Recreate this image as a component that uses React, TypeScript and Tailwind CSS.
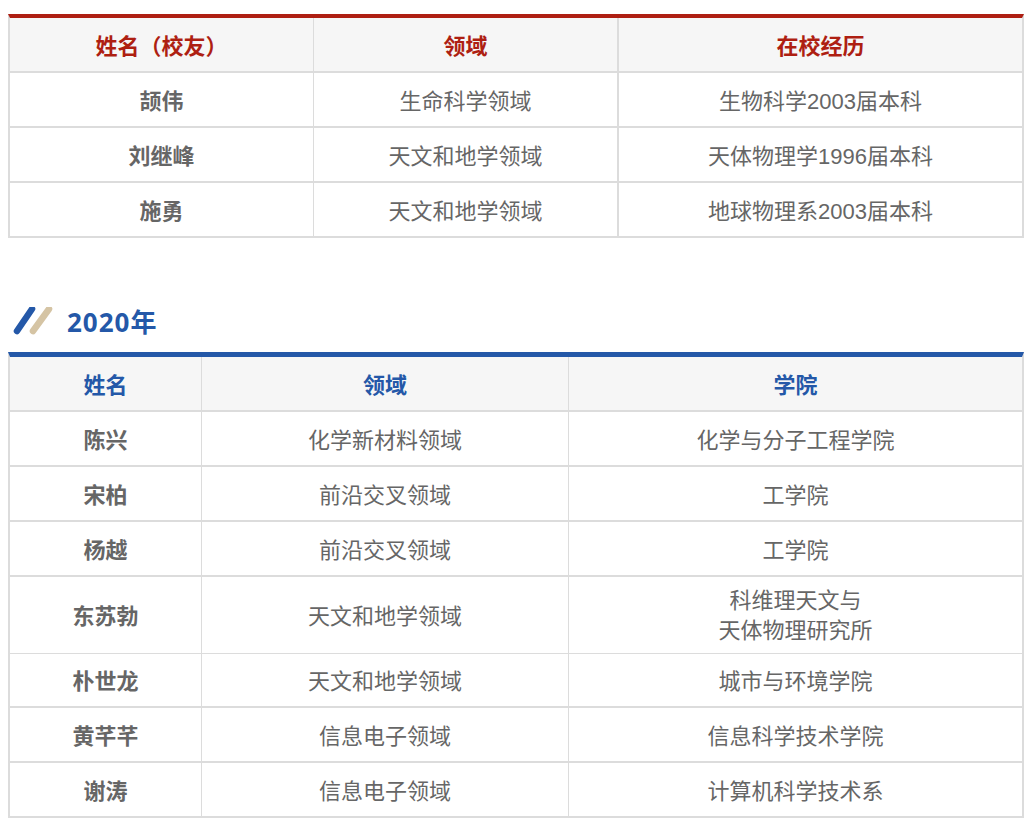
const alumni = [
  ['颉伟', '生命科学领域', '生物科学2003届本科'],
  ['刘继峰', '天文和地学领域', '天体物理学1996届本科'],
  ['施勇', '天文和地学领域', '地球物理系2003届本科'],
];

const winners = [
  { cells: ['陈兴', '化学新材料领域', '化学与分子工程学院'], rowClass: 'h-[55px] border-b-2' },
  { cells: ['宋柏', '前沿交叉领域', '工学院'], rowClass: 'h-[55px] border-b-2' },
  { cells: ['杨越', '前沿交叉领域', '工学院'], rowClass: 'h-[55px] border-b-2' },
  { cells: ['东苏勃', '天文和地学领域', '科维理天文与\n天体物理研究所'], rowClass: 'h-[77px] border-b', tall: true },
  { cells: ['朴世龙', '天文和地学领域', '城市与环境学院'], rowClass: 'h-[54px] border-b-2' },
  { cells: ['黄芊芊', '信息电子领域', '信息科学技术学院'], rowClass: 'h-[55px] border-b-2' },
  { cells: ['谢涛', '信息电子领域', '计算机科学技术系'], rowClass: 'h-[55px] border-b-2' },
];

const App = () => {
  return (
    <div className="w-[1031px] h-[826px] overflow-hidden bg-white pl-2 pr-[7px] pt-[14px] font-['Liberation_Sans','Noto_Sans_CJK_SC',sans-serif] text-[22px] leading-[30px] text-[#666666]">
      {/* first table */}
      <div className="border-t-4 border-[#ae1f12] border-x-2 border-x-[#dcdcdc]">
        <div className="grid h-[55px] grid-cols-[304px_305px_1fr] border-b-2 border-[#dcdcdc] bg-[#f6f6f6] font-bold text-[#ae1f12]">
          <div className="flex items-center justify-center border-r border-[#dcdcdc] pt-[4px]">姓名（校友）</div>
          <div className="flex items-center justify-center border-r-2 border-[#dcdcdc] pt-[4px]">领域</div>
          <div className="flex items-center justify-center pt-[4px]">在校经历</div>
        </div>
        {alumni.map((row) => (
          <div key={row[0]} className="grid h-[55px] grid-cols-[304px_305px_1fr] border-b-2 border-[#dcdcdc]">
            <div className="flex items-center justify-center border-r border-[#dcdcdc] pt-[4px] font-bold">{row[0]}</div>
            <div className="flex items-center justify-center border-r-2 border-[#dcdcdc] pt-[4px]">{row[1]}</div>
            <div className="flex items-center justify-center pt-[4px]">{row[2]}</div>
          </div>
        ))}
      </div>

      {/* 2020 heading */}
      <div className="mt-[69px] flex h-[30px] items-center">
        <svg width="59" height="30" viewBox="0 0 59 30" className="shrink-0">
          <line x1="9" y1="24" x2="24" y2="2" stroke="#2458a8" strokeWidth="6.5" strokeLinecap="round" />
          <line x1="25" y1="24" x2="41" y2="2" stroke="#d5c4a4" strokeWidth="6.5" strokeLinecap="round" />
        </svg>
        <span className="font-['Noto_Sans','Noto_Sans_CJK_SC',sans-serif] text-[26px] font-bold tracking-[1px] text-[#2458a8]">2020年</span>
      </div>

      {/* second table */}
      <div className="mt-[15px] border-t-[5px] border-[#2458a8] border-x-2 border-x-[#dcdcdc]">
        <div className="grid h-[55px] grid-cols-[192px_367px_1fr] border-b-2 border-[#dcdcdc] bg-[#f6f6f6] font-bold text-[#2458a8]">
          <div className="flex items-center justify-center border-r border-[#dcdcdc] pt-[4px]">姓名</div>
          <div className="flex items-center justify-center border-r border-[#dcdcdc] pt-[4px]">领域</div>
          <div className="flex items-center justify-center pt-[4px]">学院</div>
        </div>
        {winners.map(({ cells, rowClass, tall }) => (
          <div key={cells[0]} className={`grid grid-cols-[192px_367px_1fr] border-[#dcdcdc] ${rowClass}`}>
            <div className="flex items-center justify-center border-r border-[#dcdcdc] pt-[4px] font-bold">{cells[0]}</div>
            <div className="flex items-center justify-center border-r border-[#dcdcdc] pt-[4px]">{cells[1]}</div>
            <div className={`flex items-center justify-center whitespace-pre-line text-center ${tall ? 'pt-[2px]' : 'pt-[4px]'}`}>{cells[2]}</div>
          </div>
        ))}
      </div>
    </div>
  );
};

export default App;
